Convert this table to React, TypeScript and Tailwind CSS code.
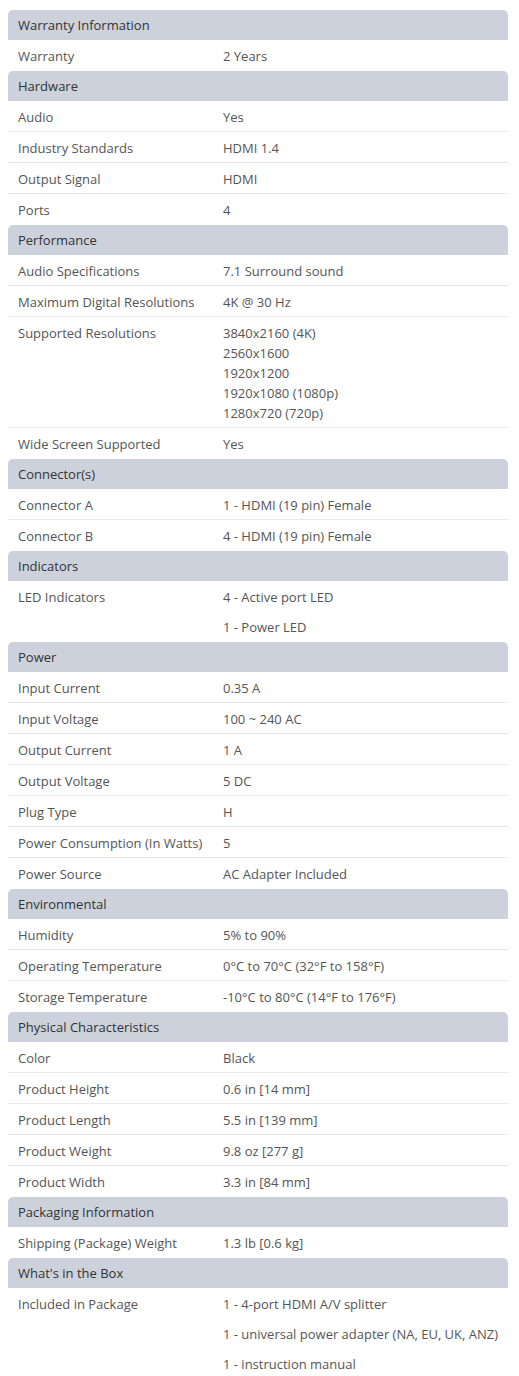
type Row = { label: string; values: string[]; stacked?: boolean };
type Section = { title: string; rows: Row[] };

const sections: Section[] = [
  { title: "Warranty Information", rows: [{ label: "Warranty", values: ["2 Years"] }] },
  {
    title: "Hardware",
    rows: [
      { label: "Audio", values: ["Yes"] },
      { label: "Industry Standards", values: ["HDMI 1.4"] },
      { label: "Output Signal", values: ["HDMI"] },
      { label: "Ports", values: ["4"] },
    ],
  },
  {
    title: "Performance",
    rows: [
      { label: "Audio Specifications", values: ["7.1 Surround sound"] },
      { label: "Maximum Digital Resolutions", values: ["4K @ 30 Hz"] },
      {
        label: "Supported Resolutions",
        values: ["3840x2160 (4K)", "2560x1600", "1920x1200", "1920x1080 (1080p)", "1280x720 (720p)"],
        stacked: true,
      },
      { label: "Wide Screen Supported", values: ["Yes"] },
    ],
  },
  {
    title: "Connector(s)",
    rows: [
      { label: "Connector A", values: ["1 - HDMI (19 pin) Female"] },
      { label: "Connector B", values: ["4 - HDMI (19 pin) Female"] },
    ],
  },
  {
    title: "Indicators",
    rows: [{ label: "LED Indicators", values: ["4 - Active port LED", "1 - Power LED"] }],
  },
  {
    title: "Power",
    rows: [
      { label: "Input Current", values: ["0.35 A"] },
      { label: "Input Voltage", values: ["100 ~ 240 AC"] },
      { label: "Output Current", values: ["1 A"] },
      { label: "Output Voltage", values: ["5 DC"] },
      { label: "Plug Type", values: ["H"] },
      { label: "Power Consumption (In Watts)", values: ["5"] },
      { label: "Power Source", values: ["AC Adapter Included"] },
    ],
  },
  {
    title: "Environmental",
    rows: [
      { label: "Humidity", values: ["5% to 90%"] },
      { label: "Operating Temperature", values: ["0°C to 70°C (32°F to 158°F)"] },
      { label: "Storage Temperature", values: ["-10°C to 80°C (14°F to 176°F)"] },
    ],
  },
  {
    title: "Physical Characteristics",
    rows: [
      { label: "Color", values: ["Black"] },
      { label: "Product Height", values: ["0.6 in [14 mm]"] },
      { label: "Product Length", values: ["5.5 in [139 mm]"] },
      { label: "Product Weight", values: ["9.8 oz [277 g]"] },
      { label: "Product Width", values: ["3.3 in [84 mm]"] },
    ],
  },
  {
    title: "Packaging Information",
    rows: [{ label: "Shipping (Package) Weight", values: ["1.3 lb [0.6 kg]"] }],
  },
  {
    title: "What's in the Box",
    rows: [
      {
        label: "Included in Package",
        values: ["1 - 4-port HDMI A/V splitter", "1 - universal power adapter (NA, EU, UK, ANZ)", "1 - instruction manual"],
      },
    ],
  },
];

export default function App() {
  return (
    <div className="bg-white min-h-screen pt-[10px] px-2 font-['Open_Sans',sans-serif] text-[13px]">
      <div className="w-[500px]">
        {sections.map((section) => (
          <div key={section.title}>
            {/* Section header */}
            <div className="bg-[#ccd1dc] rounded-t-[5px] px-[10px] py-[5px] leading-5 text-[#333]">
              {section.title}
            </div>
            {section.rows.map((row, idx) => (
              <div
                key={row.label}
                className={`grid grid-cols-[205px_1fr] border-b text-[#555] ${
                  idx === section.rows.length - 1 ? "border-white" : "border-[#e8e8e8]"
                }`}
              >
                <div className="px-[10px] pt-[6px] pb-[4px] leading-5">{row.label}</div>
                {row.stacked ? (
                  <div className="pl-[10px] pt-[6px] pb-[4px] leading-5">
                    {row.values.map((v) => (
                      <div key={v}>{v}</div>
                    ))}
                  </div>
                ) : (
                  <div>
                    {row.values.map((v) => (
                      <div key={v} className="pl-[10px] pt-[6px] pb-[4px] leading-5 whitespace-nowrap">
                        {v}
                      </div>
                    ))}
                  </div>
                )}
              </div>
            ))}
          </div>
        ))}
      </div>
    </div>
  );
}
